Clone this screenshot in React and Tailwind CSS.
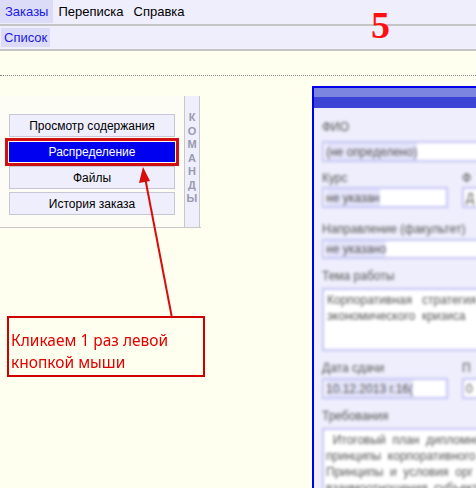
export default function App() {
  const sans = { fontFamily: '"Liberation Sans", Arial, sans-serif' };
  const inp = "border-2 border-[#c4c4f6] bg-white flex items-center pl-[2px] whitespace-nowrap overflow-hidden";
  return (
    <div className="relative w-[476px] h-[488px] overflow-hidden bg-[#fffff0] text-[12px]" style={sans}>
      {/* top menu */}
      <div className="h-[26px] bg-[#eeeefc] border-b-2 border-[#c4c4c4] flex items-stretch text-[13px]">
        <div className="px-[5px] bg-[#dcdcf8] text-[#1a1ae6] flex items-center h-[23px]">Заказы</div>
        <div className="px-[5px] text-black flex items-center h-[23px]">Переписка</div>
        <div className="px-[5px] text-black flex items-center h-[23px]">Справка</div>
      </div>
      <div className="h-[25px] bg-[#eeeefc] border-b-2 border-[#c4c4c4] flex items-center text-[13px]">
        <div className="ml-[1px] px-[3px] bg-[#dcdcf8] text-[#1a1ae6] h-[19px] flex items-center">Список</div>
      </div>

      <div className="mt-[24px] border-t border-dotted border-[#888]" />

      <div className="flex items-start mt-[10px]">
        {/* command panel */}
        <div className="mt-[10px] flex w-[201px] shrink-0 border-b border-[#c8c8c8]">
          <div className="w-[185px] bg-[#fdfdf6] border-r border-[#c8c8c8] pt-[18px] pb-[12px] flex flex-col">
            <div className="ml-[9px] w-[166px] h-[23px] bg-[#eeeefc] border border-[#c6c6d6] flex items-center justify-center text-black">Просмотр содержания</div>
            <div className="ml-[5px] mt-[1px] w-[174px] h-[28px] border-[3px] border-[#d01010] p-[1px]">
              <div className="w-full h-full bg-[#0000f0] text-white flex items-center justify-center">Распределение</div>
            </div>
            <div className="ml-[9px] w-[166px] h-[23px] bg-[#eeeefc] border border-[#c6c6d6] flex items-center justify-center text-black">Файлы</div>
            <div className="ml-[9px] mt-[3px] w-[166px] h-[23px] bg-[#eeeefc] border border-[#c6c6d6] flex items-center justify-center text-black">История заказа</div>
          </div>
          <div className="w-[15px] bg-[#eeeefc] border-r border-[#c8c8c8] flex flex-col items-center pt-[15px] text-[11px] font-bold leading-[13.5px] text-[#9a9aae]">
            <span>К</span><span>О</span><span>М</span><span>А</span><span>Н</span><span>Д</span><span>Ы</span>
          </div>
        </div>

        {/* form panel */}
        <div className="ml-[111px] flex-1 h-[410px] overflow-hidden border-l-2 border-t-2 border-[#0000e8] bg-[#eeeefc] flex flex-col">
          <div className="h-[9px] shrink-0 bg-[#7c86e0]" />
          <div className="h-[11px] shrink-0 bg-[#3b44d4]" />
          <div className="shrink-0 w-[240px] blur-[1.4px] pl-[8px] pt-[13px] text-[12px] text-[#555] flex flex-col">
            <div className="h-[12px] leading-[12px]">ФИО</div>
            <div className={"mt-[8px] h-[21px] " + inp}><span className="bg-[#e4e4fa]">(не определено)</span></div>
            <div className="mt-[10px] flex">
              <div className="w-[126px] shrink-0">
                <div className="h-[12px] leading-[12px]">Курс</div>
                <div className={"mt-[3px] h-[21px] " + inp}><span className="bg-[#e4e4fa]">не указан</span></div>
              </div>
              <div className="ml-[14px] w-[60px] shrink-0">
                <div className="h-[12px] leading-[12px]">Ф</div>
                <div className={"mt-[3px] h-[21px] " + inp}>Д</div>
              </div>
            </div>
            <div className="mt-[15px] h-[12px] leading-[12px] whitespace-nowrap">Направление (факультет)</div>
            <div className={"mt-[4px] h-[20px] " + inp}><span className="bg-[#e4e4fa]">не указано</span></div>
            <div className="mt-[11px] h-[12px] leading-[12px]">Тема работы</div>
            <div className="mt-[6px] h-[63px] border-2 border-[#c4c4f6] bg-white pl-[3px] pt-[2px] whitespace-nowrap overflow-hidden leading-[16px]">
              <div>Корпоративная&nbsp;&nbsp; стратегия</div>
              <div>экономического&nbsp; кризиса</div>
            </div>
            <div className="mt-[11px] flex">
              <div className="w-[126px] shrink-0">
                <div className="h-[12px] leading-[12px]">Дата сдачи</div>
                <div className={"mt-[4px] h-[21px] " + inp}><span className="bg-[#e4e4fa]">10.12.2013 г.16(</span></div>
              </div>
              <div className="ml-[14px] w-[60px] shrink-0">
                <div className="h-[12px] leading-[12px]">П</div>
                <div className={"mt-[4px] h-[21px] " + inp}>0</div>
              </div>
            </div>
            <div className="mt-[11px] h-[12px] leading-[12px]">Требования</div>
            <div className="mt-[6px] h-[80px] border-2 border-[#c4c4f6] bg-white pl-[2px] pt-[2px] whitespace-nowrap overflow-hidden leading-[16px]">
              <div>&nbsp;&nbsp;Итоговый&nbsp; план&nbsp; дипломной</div>
              <div>принципы&nbsp; корпоративного</div>
              <div>Принципы&nbsp; и&nbsp; условия&nbsp; орг</div>
              <div>взаимоотношения&nbsp; субъект</div>
            </div>
          </div>
        </div>
      </div>

      {/* red number */}
      <div className="absolute left-[371px] top-[6px] text-[38px] font-bold leading-none text-[#ff1010]" style={{ fontFamily: '"Liberation Serif", "Times New Roman", serif' }}>5</div>

      {/* arrow */}
      <svg className="absolute left-0 top-0" width="476" height="488" viewBox="0 0 476 488">
        <line x1="172" y1="318" x2="145.5" y2="180" stroke="#d80c0c" strokeWidth="2" />
        <polygon points="143,167 139,183 150,181" fill="#d80c0c" />
      </svg>

      {/* callout */}
      <div className="absolute left-[7px] top-[316px] w-[198px] h-[61px] border-2 border-[#d00000] pl-[2px] pt-[11px] text-[15.5px] leading-[22px] text-[#e00000]" style={{ fontFamily: '"Noto Sans", "Open Sans", sans-serif' }}>
        <div>Кликаем 1 раз левой</div>
        <div>кнопкой мыши</div>
      </div>
    </div>
  );
}
